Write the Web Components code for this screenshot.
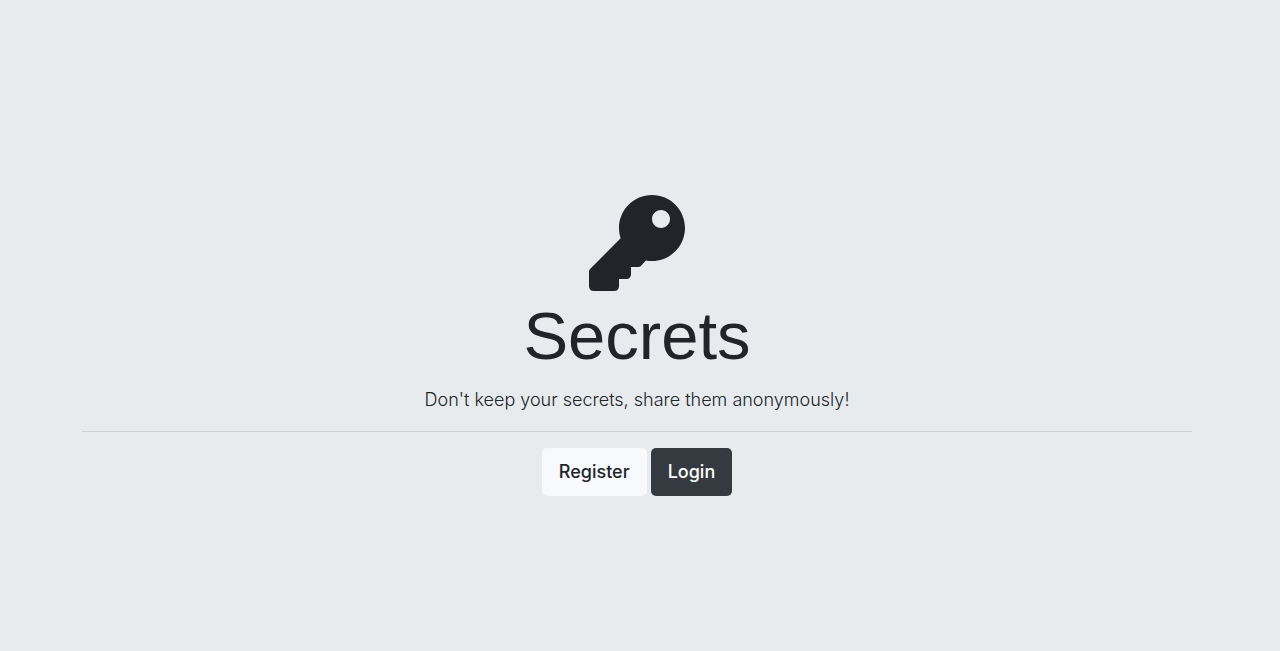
<!DOCTYPE html>
<html lang="en">
<head>
<meta charset="utf-8">
<title>Secrets</title>
<style>
html, body { margin: 0; background: #e7ebee; }
body { font-family: Inter, "Liberation Sans", sans-serif; color: #212529; }
</style>
</head>
<body>
<secrets-hero>
  <key-icon slot="icon"></key-icon>
  <span slot="title">Secrets</span>
  <span slot="lead">Don't keep your secrets, share them anonymously!</span>
  <link-button slot="actions" href="#register" tone="light">Register</link-button>
  <link-button slot="actions" href="#login" tone="dark">Login</link-button>
</secrets-hero>
<script>
class KeyIcon extends HTMLElement {
  constructor() {
    super();
    this.attachShadow({ mode: 'open' }).innerHTML = `
      <style>
        :host { display: block; width: 96px; height: 96px; }
        svg { display: block; width: 100%; height: 100%; }
      </style>
      <svg viewBox="0 0 512 512" aria-hidden="true"><path fill="currentColor" d="M512 176.001C512 273.203 433.202 352 336 352c-11.22 0-22.19-1.062-32.827-3.069l-24.012 27.014A23.999 23.999 0 0 1 261.223 384H224v40c0 13.255-10.745 24-24 24h-40v40c0 13.255-10.745 24-24 24H24c-13.255 0-24-10.745-24-24v-78.059c0-6.365 2.529-12.47 7.029-16.971l161.802-161.802C163.108 213.814 160 195.271 160 176 160 78.798 238.797.001 335.999 0 433.488-.001 512 78.511 512 176.001zM336 128c0 26.51 21.49 48 48 48s48-21.49 48-48-21.49-48-48-48-48 21.49-48 48z"/></svg>`;
  }
}
class LinkButton extends HTMLElement {
  constructor() {
    super();
    this.attachShadow({ mode: 'open' }).innerHTML = `
      <style>
        :host { display: block; }
        a { display: block; padding: 9px 17px; border-radius: 5px; font-size: 18px; line-height: 30px; font-weight: 500; text-decoration: none; background: #f8f9fc; color: #212529; }
        :host([tone="dark"]) a { background: #343a40; color: #fff; }
      </style>
      <a><slot></slot></a>`;
  }
  connectedCallback() {
    this.shadowRoot.querySelector('a').href = this.getAttribute('href');
  }
}
class SecretsHero extends HTMLElement {
  constructor() {
    super();
    this.attachShadow({ mode: 'open' }).innerHTML = `
      <style>
        :host { display: flex; min-height: 100vh; padding: 40px 6px 0 0; box-sizing: border-box; align-items: center; justify-content: center; }
        section { width: 100%; max-width: 1110px; text-align: center; }
        slot[name="icon"]::slotted(*) { margin: 0 auto; }
        h1 { margin: 0 0 4px; font-family: "Liberation Sans", Arial, sans-serif; font-size: 67px; line-height: 90px; font-weight: 400; }
        p { margin: 0 0 16px; font-size: 18px; line-height: 30px; font-weight: 300; }
        hr { margin: 0 0 16px; border: 0; border-top: 1px solid #cdd1d4; }
        nav { display: flex; justify-content: center; gap: 4px; }
      </style>
      <section>
        <slot name="icon"></slot>
        <h1><slot name="title"></slot></h1>
        <p><slot name="lead"></slot></p>
        <hr>
        <nav><slot name="actions"></slot></nav>
      </section>`;
  }
}
customElements.define('key-icon', KeyIcon);
customElements.define('link-button', LinkButton);
customElements.define('secrets-hero', SecretsHero);
</script>
</body>
</html>
